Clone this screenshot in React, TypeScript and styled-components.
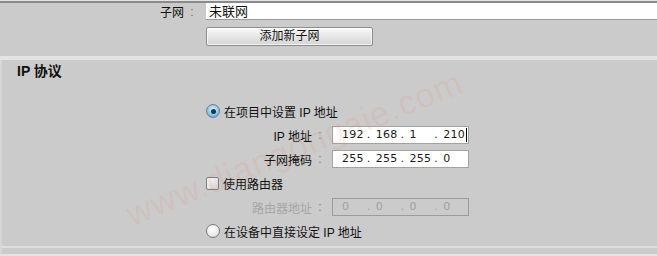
import styled, { createGlobalStyle } from 'styled-components'

const GlobalStyle = createGlobalStyle`
  html, body {
    margin: 0;
    padding: 0;
    background: #e4e4e4;
  }
  body {
    font-family: 'Liberation Sans', 'Noto Sans CJK SC', sans-serif;
    font-size: 12px;
    color: #111;
  }
`

const ipAddress = ['192', '168', '1', '210']
const subnetMask = ['255', '255', '255', '0']
const routerAddress = ['0', '0', '0', '0']

const App = () => {
  return (
    <Page>
      <GlobalStyle />
      <TopPanel>
        <TopRow>
          <Label>
            子网<Colon>:</Colon>
          </Label>
          <TextBox>未联网</TextBox>
        </TopRow>
        <TopRow>
          <span />
          <Button>添加新子网</Button>
        </TopRow>
      </TopPanel>

      <Section>
        <Heading>IP 协议</Heading>
        <Options>
          <OptionRow>
            <Radio $checked />
            <span>在项目中设置 IP 地址</span>
          </OptionRow>
          <FieldRow>
            <Label>
              IP 地址<Colon>:</Colon>
            </Label>
            <IpField values={ipAddress} caret />
          </FieldRow>
          <FieldRow>
            <Label>
              子网掩码<Colon>:</Colon>
            </Label>
            <IpField values={subnetMask} />
          </FieldRow>
          <OptionRow>
            <Checkbox />
            <span>使用路由器</span>
          </OptionRow>
          <FieldRow>
            <Label $disabled>
              路由器地址<Colon>:</Colon>
            </Label>
            <IpField values={routerAddress} disabled />
          </FieldRow>
          <OptionRow>
            <Radio />
            <span>在设备中直接设定 IP 地址</span>
          </OptionRow>
        </Options>
      </Section>
      <BottomStrip />

      <Watermark>www.diangongaie.com</Watermark>
    </Page>
  )
}

interface IpFieldProps {
  values: string[]
  caret?: boolean
  disabled?: boolean
}

const IpField = ({ values, caret, disabled }: IpFieldProps) => (
  <IpBox $disabled={disabled}>
    {values.map((v, i) => (
      <Octet key={i}>
        <Dot $ghost={i === 0}>.</Dot>
        <span>{v}</span>
      </Octet>
    ))}
    {caret && <Caret />}
  </IpBox>
)

export default App

const Page = styled.div`
  position: relative;
  width: 657px;
  height: 256px;
  overflow: hidden;
  padding-top: 1px;
  box-sizing: border-box;
`

const TopPanel = styled.div`
  background: #cbcbcb;
  border-top: 2px solid #8a8a8a;
  height: 55px;
  box-sizing: border-box;
  display: flex;
  flex-direction: column;
  gap: 7px;
`

const TopRow = styled.div`
  display: grid;
  grid-template-columns: 198px 1fr;
  column-gap: 8px;
  align-items: center;
  &:nth-child(2) {
    grid-template-columns: 198px 167px;
  }
`

const Label = styled.span<{ $disabled?: boolean }>`
  display: flex;
  justify-content: flex-end;
  align-items: center;
  color: ${({ $disabled }) => ($disabled ? '#a6a6a6' : '#111')};
  white-space: nowrap;
`

const Colon = styled.span`
  width: 12px;
  text-align: center;
  margin-left: 2px;
  color: #777;
`

const TextBox = styled.div`
  height: 17px;
  line-height: 17px;
  background: #fff;
  border-bottom: 1px solid #9a9a9a;
  padding-left: 3px;
  font-size: 13px;
  box-sizing: border-box;
`

const Button = styled.div`
  height: 19px;
  line-height: 17px;
  text-align: center;
  font-size: 12px;
  border: 1px solid #8d8d8d;
  border-radius: 2px;
  box-sizing: border-box;
  background: linear-gradient(#fafafa, #e6e6e6 50%, #d4d4d4);
  box-shadow: inset 0 0 0 1px rgba(255, 255, 255, 0.7);
`

const Section = styled.div`
  margin-top: 4px;
  height: 188px;
  background: #cbcbcb;
  border-left: 2px solid #d6d6d6;
  border-bottom: 2px solid #dedede;
  padding: 2px 0 0 15px;
  box-sizing: border-box;
`

const BottomStrip = styled.div`
  height: 6px;
  background: #cbcbcb;
  border-left: 2px solid #d6d6d6;
`

const Heading = styled.div`
  font-size: 14px;
  font-weight: bold;
  line-height: 18px;
  color: #111;
`

const Options = styled.div`
  margin: 19px 0 0 189px;
  display: grid;
  grid-auto-rows: 24px;
`

const OptionRow = styled.div`
  display: flex;
  align-items: center;
  gap: 4px;
`

const FieldRow = styled.div`
  display: grid;
  grid-template-columns: 120px 137px;
  column-gap: 6px;
  align-items: center;
`

const Radio = styled.span<{ $checked?: boolean }>`
  width: 14px;
  height: 14px;
  border-radius: 50%;
  box-sizing: border-box;
  border: 1px solid #7a7a7a;
  display: inline-flex;
  align-items: center;
  justify-content: center;
  background: ${({ $checked }) =>
    $checked
      ? 'radial-gradient(circle at 50% 40%, #e6f6ff, #7fc4ea 60%, #3f8dbd)'
      : 'radial-gradient(circle at 40% 35%, #ffffff, #ececec 55%, #c8c8c8)'};
  &::after {
    content: '';
    display: ${({ $checked }) => ($checked ? 'block' : 'none')};
    width: 5px;
    height: 5px;
    border-radius: 50%;
    background: #17384f;
  }
`

const Checkbox = styled.span`
  width: 13px;
  height: 13px;
  box-sizing: border-box;
  border: 1px solid #7d7d7d;
  border-radius: 2px;
  background: linear-gradient(135deg, #fdfdfd, #e2e2e2 60%, #d0d0d0);
`

const IpBox = styled.div<{ $disabled?: boolean }>`
  position: relative;
  display: flex;
  height: 18px;
  box-sizing: border-box;
  border: 1px solid ${({ $disabled }) => ($disabled ? '#9c9c9c' : '#a3a3a3')};
  background: ${({ $disabled }) => ($disabled ? '#cbcbcb' : '#ffffff')};
  color: ${({ $disabled }) => ($disabled ? '#a0a0a0' : '#1a1a1a')};
  font-family: 'DejaVu Sans', sans-serif;
  font-size: 11px;
  letter-spacing: 0.3px;
  line-height: 16px;
`

const Octet = styled.span`
  width: 35px;
  display: flex;
`

const Dot = styled.span<{ $ghost?: boolean }>`
  width: 9px;
  visibility: ${({ $ghost }) => ($ghost ? 'hidden' : 'visible')};
`

const Caret = styled.span`
  position: absolute;
  left: 133px;
  top: 1px;
  width: 1px;
  height: 14px;
  background: #000;
`

const Watermark = styled.div`
  position: absolute;
  left: 128px;
  top: 196px;
  transform: rotate(-22deg);
  transform-origin: left center;
  font-family: 'Liberation Sans', sans-serif;
  font-size: 34px;
  letter-spacing: 1px;
  color: rgba(236, 120, 90, 0.12);
  pointer-events: none;
  white-space: nowrap;
`
